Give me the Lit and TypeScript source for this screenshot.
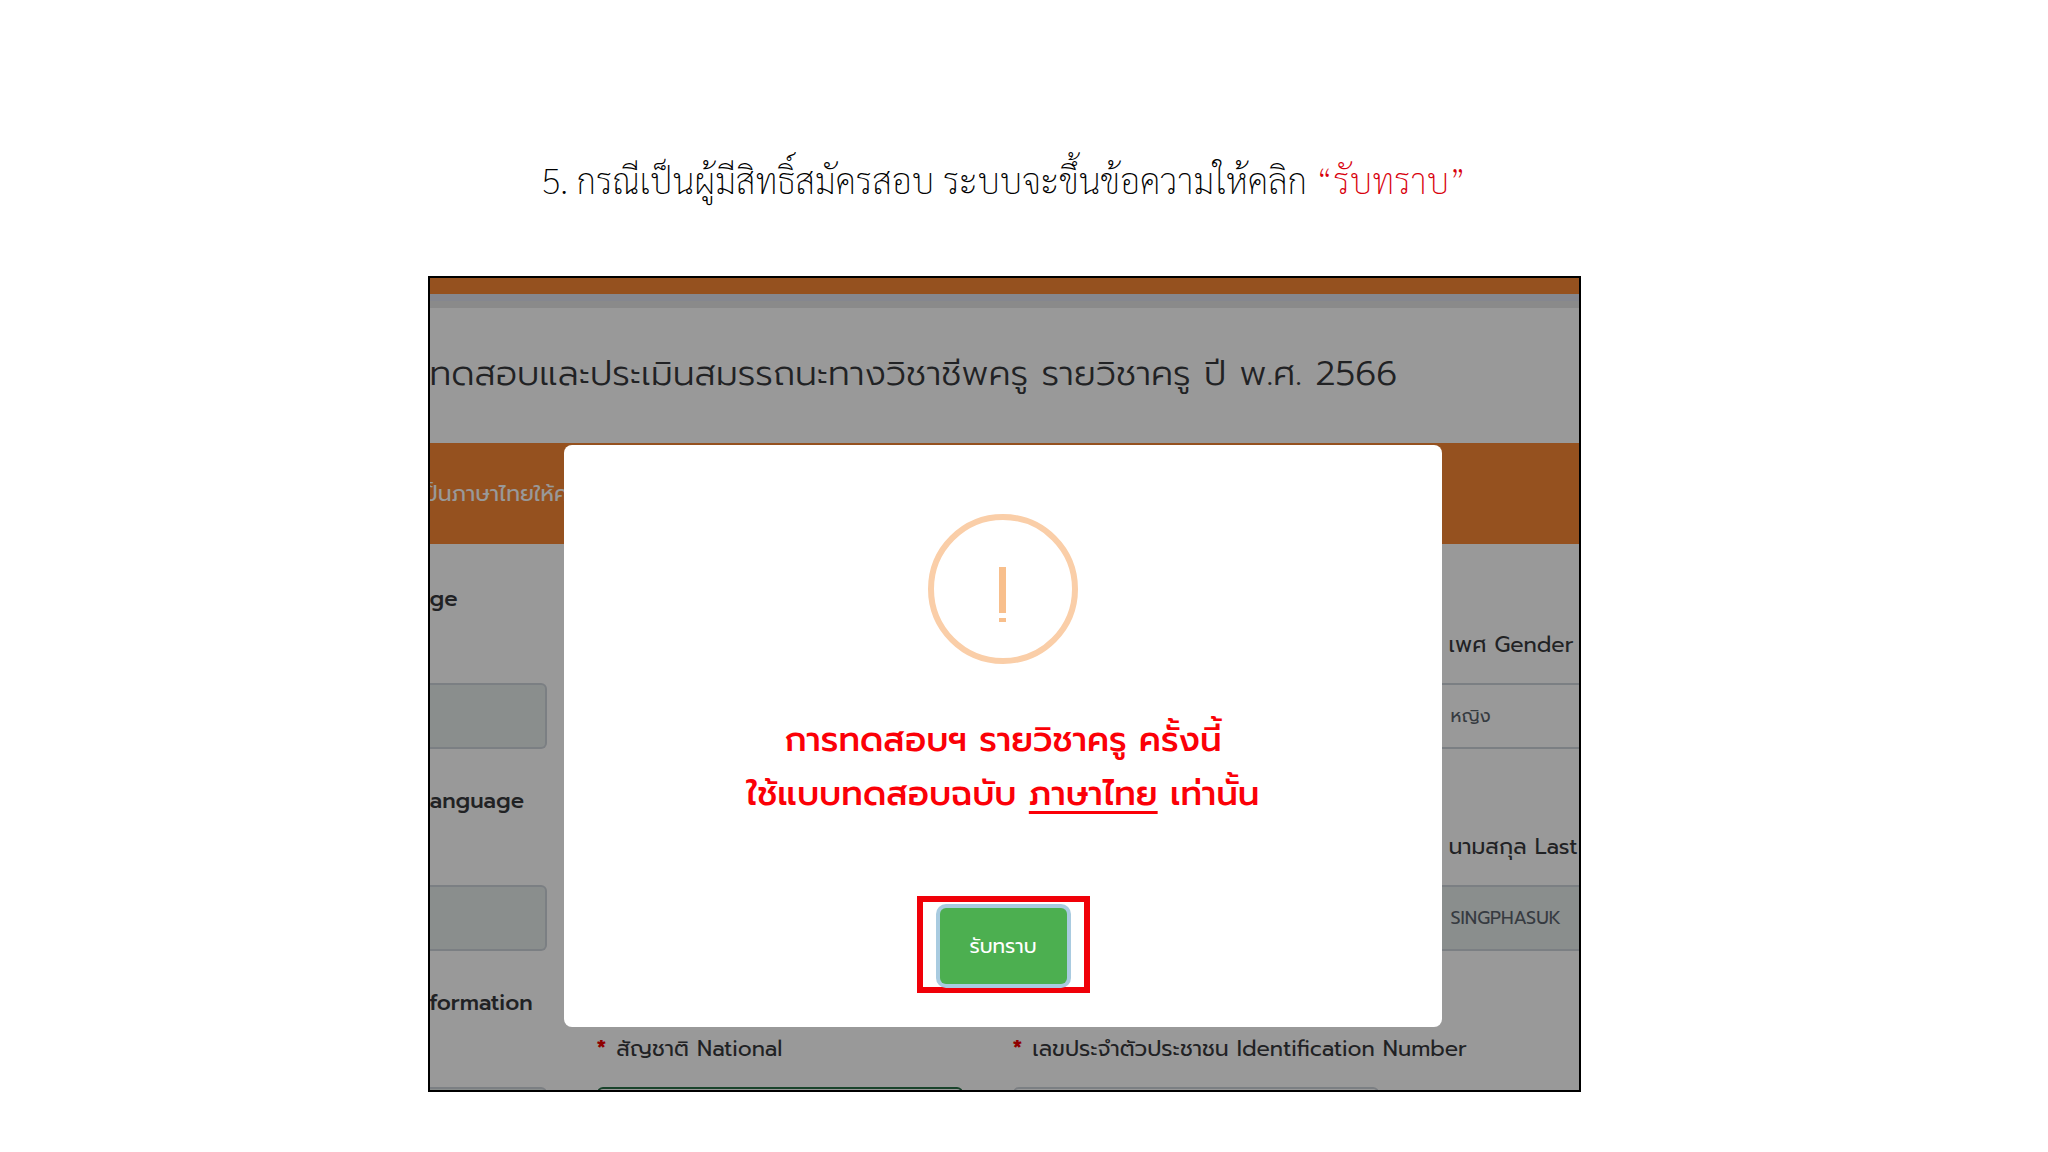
import { LitElement, html, css } from "lit";
import { customElement } from "lit/decorators.js";

@customElement("registration-form")
export class RegistrationForm extends LitElement {
  static styles = css`
    :host {
      display: block;
      color: #38393d;
      background: #fff;
    }
    .topbar {
      height: 16px;
      background: #f88835;
    }
    .strip {
      height: 14px;
      border-top: 7px solid #dee2ee;
      background: #e6e6e6;
      box-sizing: border-box;
    }
    .heading {
      margin: 0;
      height: 135px;
      line-height: 132px;
      font-size: 35px;
      font-weight: 300;
      white-space: nowrap;
    }
    .band {
      height: 101px;
      line-height: 102px;
      background: #f88835;
      color: #fff;
      font-size: 22px;
      white-space: nowrap;
      margin: 0;
      text-indent: -6px;
      overflow: hidden;
    }
    .rows {
      padding-top: 3px;
      height: 546px;
      overflow: hidden;
      box-sizing: border-box;
    }
    .row {
      display: grid;
      grid-template-columns: 117px 366px 366px 366px;
      column-gap: 50px;
      height: 202px;
      font-size: 22px;
      line-height: 28px;
      white-space: nowrap;
    }
    .cell {
      display: flex;
      flex-direction: column;
      justify-content: flex-end;
      gap: 24px;
    }
    .cell.side {
      gap: 70px;
      font-weight: 500;
    }
    .cell.last {
      grid-column: 4;
    }
    .label {
      display: flex;
      gap: 10px;
      padding-left: 20px;
    }
    .label.required {
      padding-left: 0;
    }
    .star {
      color: #e00;
      font-weight: 700;
    }
    .field {
      box-sizing: border-box;
      width: 100%;
      height: 66px;
      margin: 0;
      padding: 0 20px;
      border: 2px solid #ced4da;
      border-radius: 6px;
      background: #fff;
      color: #5b636c;
      font: inherit;
      font-size: 18px;
      font-weight: 400;
      appearance: none;
    }
    .field.locked {
      background: #e7edec;
    }
    .side .field {
      border-left: 0;
      border-radius: 0 6px 6px 0;
    }
    .field.valid {
      border-color: #2a7048;
    }
  `;

  render() {
    return html`
      <div class="topbar"></div>
      <div class="strip"></div>
      <h2 class="heading">ทดสอบและประเมินสมรรถนะทางวิชาชีพครู รายวิชาครู ปี พ.ศ. 2566</h2>
      <p class="band">ป็นภาษาไทยให้ค</p>
      <div class="rows">
        <div class="row">
          <div class="cell side">
            <label for="s1">ge</label>
            <input class="field locked" id="s1" readonly />
          </div>
          <div class="cell last">
            <label class="label" for="gender">เพศ Gender</label>
            <select class="field" id="gender">
              <option>หญิง</option>
            </select>
          </div>
        </div>
        <div class="row">
          <div class="cell side">
            <label for="s2">anguage</label>
            <input class="field locked" id="s2" readonly />
          </div>
          <div class="cell last">
            <label class="label" for="last">นามสกุล Last</label>
            <input class="field locked" id="last" readonly .value=${"SINGPHASUK"} />
          </div>
        </div>
        <div class="row">
          <div class="cell side">
            <label for="s3">formation</label>
            <input class="field locked" id="s3" readonly />
          </div>
          <div class="cell">
            <label class="label required" for="national"
              ><span class="star">*</span><span>สัญชาติ National</span></label
            >
            <input class="field valid" id="national" />
          </div>
          <div class="cell">
            <label class="label required" for="idn"
              ><span class="star">*</span><span>เลขประจำตัวประชาชน Identification Number</span></label
            >
            <input class="field" id="idn" />
          </div>
        </div>
      </div>
    `;
  }
}

@customElement("notice-dialog")
export class NoticeDialog extends LitElement {
  static styles = css`
    :host {
      display: block;
      width: 878px;
      box-sizing: border-box;
      padding: 69px 0 34px;
      border-radius: 8px;
      background: #fff;
      text-align: center;
    }
    .icon {
      display: block;
      margin: 0 auto;
    }
    .message {
      margin: 49px 0 75px;
      color: #fb0007;
      font-size: 34px;
      line-height: 54px;
      font-weight: 500;
    }
    .underlined {
      text-decoration: underline;
      text-decoration-thickness: 3px;
      text-underline-offset: 6px;
    }
    .callout {
      width: fit-content;
      margin: 0 auto;
      padding: 6px 17px 3px;
      border: 6px solid #f00008;
    }
    .ok {
      display: block;
      width: 127px;
      height: 76px;
      margin: 0;
      border: 0;
      border-radius: 6px;
      background: #4caf50;
      box-shadow: 0 0 0 4px #a9cbe0;
      color: #fff;
      font: inherit;
      font-size: 20px;
    }
  `;

  render() {
    return html`
      <svg class="icon" width="150" height="150" viewBox="0 0 150 150" fill="none" aria-hidden="true">
        <circle cx="75" cy="75" r="72" stroke="#facea8" stroke-width="6" />
        <path d="M71 53h7v46h-7zM71 104h7v4h-7z" fill="#f8bf8c" />
      </svg>
      <div class="message">
        การทดสอบฯ รายวิชาครู ครั้งนี้<br />
        ใช้แบบทดสอบฉบับ <span class="underlined">ภาษาไทย</span> เท่านั้น
      </div>
      <div class="callout"><button class="ok" type="button">รับทราบ</button></div>
    `;
  }
}

@customElement("app-root")
export class AppRoot extends LitElement {
  static styles = css`
    :host {
      display: flex;
      flex-direction: column;
      align-items: center;
      min-height: 100vh;
      box-sizing: border-box;
      padding: 144px 80px 60px 40px;
      background: #fff;
      font-family: Prompt, Kanit, "Noto Sans Thai", sans-serif;
    }
    .title {
      margin: 0 0 60px;
      font-family: Sarabun, "TH Sarabun New", sans-serif;
      font-size: 35px;
      line-height: 72px;
      font-weight: 200;
      color: #000;
      text-align: center;
    }
    .accent {
      color: #d8000c;
    }
    .shot {
      position: relative;
      width: 100%;
      max-width: 1153px;
      box-sizing: border-box;
      border: 2px solid #000;
      overflow: hidden;
    }
    .backdrop {
      position: absolute;
      inset: 0;
      display: flex;
      justify-content: center;
      align-items: flex-start;
      padding: 167px 2px 0 0;
      background: rgba(0, 0, 0, 0.4);
    }
  `;

  render() {
    return html`
      <h1 class="title">
        5. กรณีเป็นผู้มีสิทธิ์สมัครสอบ ระบบจะขึ้นข้อความให้คลิก <span class="accent">“รับทราบ”</span>
      </h1>
      <section class="shot">
        <registration-form></registration-form>
        <div class="backdrop">
          <notice-dialog role="dialog" aria-modal="true"></notice-dialog>
        </div>
      </section>
    `;
  }
}
